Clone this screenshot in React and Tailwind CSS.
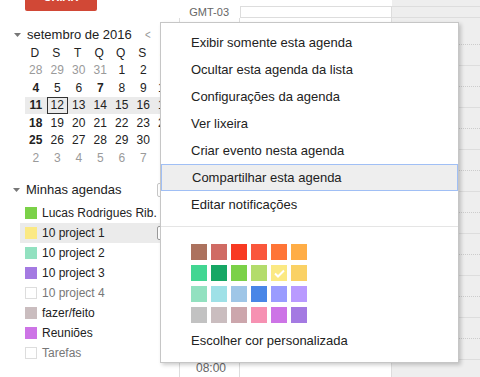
const weeks = [
  [[28, 'o'], [29, 'o'], [30, 'o'], [31, 'o'], [1], [2], [3]],
  [[4, 'b'], [5], [6], [7, 'b'], [8], [9], [10]],
  [[11, 'b'], [12, 't'], [13], [14], [15], [16], [17]],
  [[18, 'b'], [19], [20], [21], [22], [23], [24]],
  [[25, 'b'], [26], [27], [28], [29], [30], [1, 'o']],
  [[2, 'o'], [3, 'o'], [4, 'o'], [5, 'o'], [6, 'o'], [7, 'o'], [8, 'o']],
]

const calendars = [
  { name: 'Lucas Rodrigues Rib.', color: 'bg-[#7bd148]' },
  { name: '10 project 1', color: 'bg-[#fbe983]', active: true },
  { name: '10 project 2', color: 'bg-[#92e1c0]' },
  { name: '10 project 3', color: 'bg-[#a47ae2]' },
  { name: '10 project 4', hidden: true },
  { name: 'fazer/feito', color: 'bg-[#cabdbf]' },
  { name: 'Reuniões', color: 'bg-[#cd74e6]' },
  { name: 'Tarefas', hidden: true },
]

const menuItems = [
  'Exibir somente esta agenda',
  'Ocultar esta agenda da lista',
  'Configurações da agenda',
  'Ver lixeira',
  'Criar evento nesta agenda',
  'Compartilhar esta agenda',
  'Editar notificações',
]

const palette = [
  ['bg-[#ac725e]', 'bg-[#d06b64]', 'bg-[#f83a22]', 'bg-[#fa573c]', 'bg-[#ff7537]', 'bg-[#ffad46]'],
  ['bg-[#42d692]', 'bg-[#16a765]', 'bg-[#7bd148]', 'bg-[#b3dc6c]', 'bg-[#fbe983]', 'bg-[#fad165]'],
  ['bg-[#92e1c0]', 'bg-[#9fe1e7]', 'bg-[#9fc6e7]', 'bg-[#4986e7]', 'bg-[#9a9cff]', 'bg-[#b99aff]'],
  ['bg-[#c2c2c2]', 'bg-[#cabdbf]', 'bg-[#cca6ac]', 'bg-[#f691b2]', 'bg-[#cd74e6]', 'bg-[#a47ae2]'],
]

const hours = ['00:00', '01:00', '02:00', '03:00', '04:00', '05:00', '06:00', '07:00', '08:00']

function Caret() {
  return (
    <svg width="7" height="4" viewBox="0 0 7 4" className="shrink-0">
      <path d="M0 0h7L3.5 4z" fill="#777" />
    </svg>
  )
}

function MiniCalendar() {
  return (
    <div className="flex flex-col">
      <div className="flex items-center h-[19px] pl-[14px] mt-[14px]">
        <Caret />
        <span className="ml-[6px] text-[13px] text-[#222]">setembro de 2016</span>
        <span className="ml-auto mr-[27px] text-[13px] text-[#999] scale-x-75">&lt;</span>
      </div>
      <div className="ml-[24px] w-[154px] grid grid-cols-[repeat(7,21.5px)] text-[12px] text-[#222]">
        {['D', 'S', 'T', 'Q', 'Q', 'S', 'S'].map((d, i) => (
          <div key={i} className="h-[17.5px] flex items-center justify-center">{d}</div>
        ))}
      </div>
      {weeks.map((w, i) => (
        <div key={i} className={`ml-[25px] w-[154px] grid grid-cols-[repeat(7,21.5px)] text-[12px] ${i === 2 ? 'bg-[#ebebeb]' : ''}`}>
          {w.map(([n, f], j) => (
            <div
              key={j}
              className={`h-[17.5px] flex items-center justify-center ${f === 'o' ? 'text-[#9a9a9a]' : 'text-[#222]'} ${f === 'b' ? 'font-bold' : ''} ${f === 't' ? 'border border-[#333]' : ''}`}
            >
              {n}
            </div>
          ))}
        </div>
      ))}
    </div>
  )
}

function Sidebar() {
  return (
    <div className="w-[179px] shrink-0 flex flex-col">
      <div className="-mt-[16px] ml-[25px] w-[72px] h-[27px] rounded-[2px] bg-[#d14836] flex items-center justify-center text-white text-[11px] font-bold">
        CRIAR
      </div>
      <MiniCalendar />
      <div className="flex items-center h-[20px] mt-[13.5px] pl-[13px]">
        <Caret />
        <span className="ml-[6px] text-[13px] text-[#222]">Minhas agendas</span>
        <span className="ml-auto mr-[8px] w-[14px] h-[14px] border border-[#c6c6c6] rounded-[2px] bg-white" />
      </div>
      <div className="flex flex-col mt-[3px]">
        {calendars.map((c) => (
          <div key={c.name} className={`flex items-center h-[20px] ml-[20px] pl-[5px] ${c.active ? 'bg-[#ebebeb]' : ''}`}>
            <span className={`w-[12px] h-[12px] shrink-0 ${c.hidden ? 'border border-[#ddd] bg-white' : c.color}`} />
            <span className={`ml-[5px] text-[12px] whitespace-nowrap ${c.hidden ? 'text-[#777]' : 'text-[#222]'}`}>{c.name}</span>
            {c.active && <span className="ml-auto mr-[8px] w-[14px] h-[14px] border border-[#999] rounded-[2px] bg-white" />}
          </div>
        ))}
      </div>
    </div>
  )
}

function HourCells({ labels }) {
  return (
    <div className="flex flex-col pt-[6px]">
      {hours.map((h) => (
        <div key={h} className="h-[42px] shrink-0 border-b border-[#ddd] relative">
          {labels ? (
            <div className="text-right pr-[13px] text-[12px] text-[#666] leading-[14px] pt-[1px]">{h}</div>
          ) : (
            <div className="mt-[20px] ml-[2px] border-t border-dotted border-[#ccc]" />
          )}
        </div>
      ))}
    </div>
  )
}

function Grid() {
  return (
    <div className="flex-1 flex flex-col min-w-0">
      <div className="flex h-[6px]">
        <div className="w-[213px]" />
        <div className="flex-1 bg-[#eee]" />
      </div>
      <div className="flex h-[12px]">
        <div className="w-[61px] text-right pr-[11px] text-[11px] leading-[12px] text-[#666]">GMT-03</div>
        <div className="w-[152px] border border-[#ddd] bg-white" />
        <div className="flex-1 bg-[#eee] border-y border-[#ddd]" />
      </div>
      <div className="flex flex-1 overflow-hidden">
        <div className="w-[61px] border-x border-[#ddd]">
          <HourCells labels />
        </div>
        <div className="w-[152px] border-r border-[#ddd] bg-white">
          <HourCells />
        </div>
        <div className="flex-1 bg-[#eee]">
          <HourCells />
        </div>
      </div>
    </div>
  )
}

function Menu() {
  return (
    <div className="absolute left-[160px] top-[22px] w-[299px] h-[341px] bg-white border border-[#c6c6c6] shadow-[2px_2px_4px_rgba(0,0,0,0.2)] pt-[6px] flex flex-col">
      {menuItems.map((m, i) => (
        <div
          key={m}
          className={`h-[27px] shrink-0 flex items-center pl-[30px] text-[13px] text-[#222] ${i === 5 ? 'bg-[#eee] border border-[#a0bff5] pl-[29px]' : ''}`}
        >
          {m}
        </div>
      ))}
      <div className="mt-[8px] border-t border-[#e5e5e5]" />
      <div className="mt-[17px] ml-[30px] flex flex-col gap-[5px]">
        {palette.map((row, i) => (
          <div key={i} className="flex gap-[4px]">
            {row.map((c, j) => (
              <div key={j} className={`w-[16px] h-[16px] ${c} flex items-center justify-center`}>
                {i === 1 && j === 4 && (
                  <svg width="11" height="9" viewBox="0 0 11 9">
                    <path d="M1 4.5l3 3L10 1.5" stroke="#fff" strokeWidth="2" fill="none" />
                  </svg>
                )}
              </div>
            ))}
          </div>
        ))}
      </div>
      <div className="mt-[10px] ml-[30px] text-[13px] text-[#222] leading-[15px]">Escolher cor personalizada</div>
    </div>
  )
}

export default function App() {
  return (
    <div className="w-[480px] h-[377px] relative overflow-hidden bg-white flex font-['Liberation_Sans',Arial,sans-serif]">
      <Sidebar />
      <Grid />
      <Menu />
    </div>
  )
}
